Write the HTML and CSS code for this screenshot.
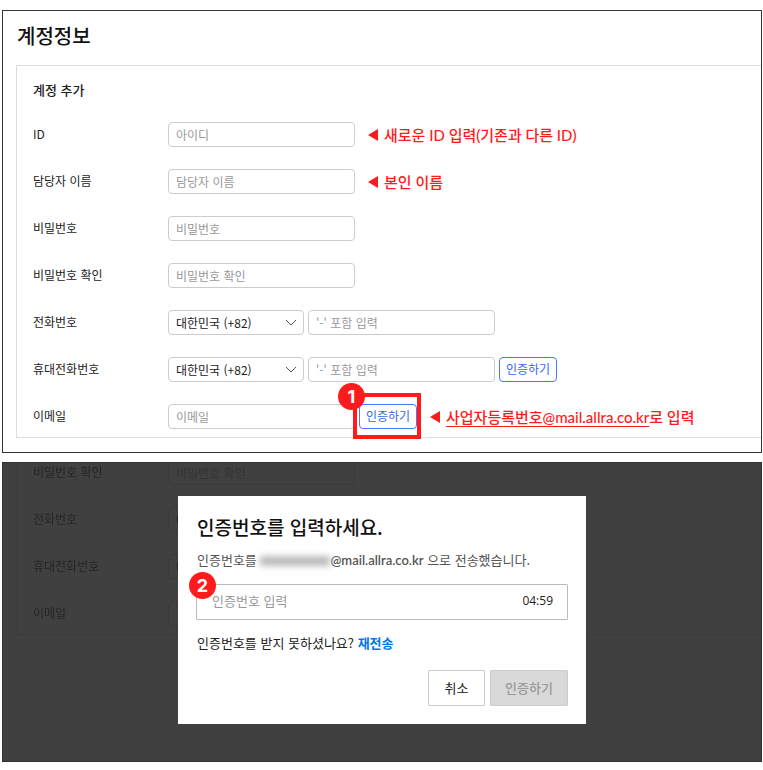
FILE: index.html
```html
<!DOCTYPE html>
<html lang="ko">
  <head>
    <meta charset="utf-8">
    <title>계정정보</title>
    <link rel="stylesheet" href="styles.css">
  </head>
  <body>
    <main class="frame account">
      <h1>계정정보</h1>
      <form class="panel">
        <h2>계정 추가</h2>
        <div class="row">
          <label for="user-id">ID</label>
          <input type="text" id="user-id" class="control" placeholder="아이디">
          <p class="note"><i class="arrow"></i>새로운 ID 입력(기존과 다른 ID)</p>
        </div>
        <div class="row">
          <label for="manager">담당자 이름</label>
          <input type="text" id="manager" class="control" placeholder="담당자 이름">
          <p class="note"><i class="arrow"></i>본인 이름</p>
        </div>
        <div class="row">
          <label for="password">비밀번호</label>
          <input type="password" id="password" class="control" placeholder="비밀번호">
        </div>
        <div class="row">
          <label for="password-check">비밀번호 확인</label>
          <input type="password" id="password-check" class="control" placeholder="비밀번호 확인">
        </div>
        <div class="row">
          <label for="phone">전화번호</label>
          <select class="control country" aria-label="전화번호 국가">
            <option>대한민국 (+82)</option>
          </select>
          <input type="tel" id="phone" class="control" placeholder="'-' 포함 입력">
        </div>
        <div class="row">
          <label for="mobile">휴대전화번호</label>
          <select class="control country" aria-label="휴대전화번호 국가">
            <option>대한민국 (+82)</option>
          </select>
          <input type="tel" id="mobile" class="control" placeholder="'-' 포함 입력">
          <button type="button" class="verify">인증하기</button>
        </div>
        <div class="row">
          <label for="email">이메일</label>
          <input type="email" id="email" class="control" placeholder="이메일">
          <div class="marked">
            <button type="button" class="verify">인증하기</button>
            <span class="outline"></span>
            <span class="badge badge-first">1</span>
          </div>
          <p class="note"><i class="arrow"></i><span><u>사업자등록번호@mail.allra.co.kr</u>로 입력</span></p>
        </div>
      </form>
    </main>

    <section class="frame dialog-frame">
      <div class="panel panel-behind" inert>
        <div class="row">
          <label for="behind-check">비밀번호 확인</label>
          <input type="password" id="behind-check" class="control" placeholder="비밀번호 확인">
        </div>
        <div class="row">
          <label for="behind-phone">전화번호</label>
          <select class="control country" aria-label="국가">
            <option>대한민국 (+82)</option>
          </select>
          <input type="tel" id="behind-phone" class="control">
        </div>
        <div class="row">
          <label for="behind-mobile">휴대전화번호</label>
          <select class="control country" aria-label="국가">
            <option>대한민국 (+82)</option>
          </select>
          <input type="tel" id="behind-mobile" class="control">
        </div>
        <div class="row">
          <label for="behind-email">이메일</label>
          <input type="email" id="behind-email" class="control">
        </div>
      </div>

      <div class="overlay">
        <form class="dialog" role="dialog" aria-labelledby="dialog-title">
          <h2 id="dialog-title">인증번호를 입력하세요.</h2>
          <p class="sent">인증번호를 <span class="masked"></span><strong>@mail.allra.co.kr</strong> 으로 전송했습니다.</p>
          <div class="code">
            <input type="text" aria-label="인증번호" placeholder="인증번호 입력">
            <time>04:59</time>
            <span class="badge badge-second">2</span>
          </div>
          <p class="resend">인증번호를 받지 못하셨나요? <a href="#">재전송</a></p>
          <div class="actions">
            <button type="button" class="cancel">취소</button>
            <button type="submit" class="submit" disabled>인증하기</button>
          </div>
        </form>
      </div>
    </section>
  </body>
</html>
```

FILE: styles.css
```css
* {
  box-sizing: border-box;
}

body {
  margin: 10px 1px 8px 2px;
  background: #fff;
  color: #222;
  font-family: "Noto Sans CJK KR", sans-serif;
  font-size: 12px;
}

h1,
h2,
p {
  margin: 0;
}

input,
select,
button {
  font: inherit;
}

.frame {
  border: 1px solid #333;
  overflow: hidden;
}

.account {
  padding: 11px 0 14px 13px;
}

.account h1 {
  padding-left: 1px;
  color: #111;
  font-size: 20px;
  line-height: 28px;
  font-weight: 500;
}

.panel {
  display: flex;
  flex-direction: column;
  gap: 22px;
  margin-top: 15px;
  padding: 13px 0 8px 16px;
  border: 1px solid #ddd;
  border-right: 0;
}

.panel h2 {
  font-size: 13px;
  line-height: 21px;
  font-weight: 500;
}

.row {
  display: flex;
  align-items: center;
  gap: 4px;
  height: 25px;
}

.row label {
  width: 131px;
  flex-shrink: 0;
  line-height: 18px;
  padding-bottom: 2px;
}

.control {
  width: 187px;
  height: 25px;
  padding: 0 7px;
  border: 1px solid #ccc;
  border-radius: 4px;
  background: #fff;
  color: #222;
  outline: none;
}

.control::placeholder {
  color: #999;
}

.country {
  width: 136px;
  appearance: none;
  background: #fff url("data:image/svg+xml,%3Csvg xmlns='http://www.w3.org/2000/svg' width='12' height='7' fill='none' stroke='%23555'%3E%3Cpath d='M1 1 6 6 11 1'/%3E%3C/svg%3E") no-repeat right 6px center;
}

.verify {
  width: 58px;
  height: 25px;
  padding: 0 0 2px;
  border: 1px solid #4a78ff;
  border-radius: 4px;
  background: #fff;
  color: #3567f5;
}

.note {
  display: flex;
  align-items: center;
  gap: 6px;
  margin-left: 9px;
  color: #ff1b1b;
  font-family: Lato, "Noto Sans CJK KR", sans-serif;
  font-size: 15px;
  line-height: 20px;
  font-weight: 500;
  white-space: nowrap;
}

.note u {
  text-decoration-thickness: 1px;
  text-underline-offset: 3px;
}

.arrow {
  border: 6px solid transparent;
  border-left-width: 0;
  border-right: 10px solid #ff1b1b;
}

.marked {
  position: relative;
  display: flex;
}

.outline {
  position: absolute;
  inset: -11px -4px -10px -6px;
  border: 4px solid #ff1b1b;
  pointer-events: none;
}

.badge {
  position: absolute;
  width: 27px;
  height: 27px;
  border-radius: 50%;
  background: #ff1b1b;
  color: #fff;
  font-family: Inter, sans-serif;
  font-size: 18px;
  line-height: 27px;
  font-weight: 700;
  text-align: center;
}

.badge-first {
  top: -21px;
  left: -21px;
}

.dialog-frame {
  position: relative;
  height: 300px;
  margin-top: 9px;
  padding-left: 13px;
}

/* the rest of the form, scrolled up under the dialog */
.panel-behind {
  margin-top: -3px;
  padding-top: 0;
  border-top: 0;
  opacity: 0.5;
}

.overlay {
  position: absolute;
  inset: 0;
  display: flex;
  align-items: center;
  justify-content: center;
  padding-bottom: 5px;
  background: rgba(0, 0, 0, 0.75);
}

.dialog {
  width: 408px;
  padding: 17px 18px 18px 19px;
  background: #fff;
  font-size: 13px;
}

.dialog h2 {
  color: #111;
  font-size: 19px;
  line-height: 28px;
  font-weight: 500;
}

.sent {
  margin-top: 9px;
  color: #555;
  line-height: 20px;
  white-space: nowrap;
}

.sent strong {
  font-family: Lato, sans-serif;
  font-size: 13px;
  font-weight: 600;
}

.masked {
  display: inline-block;
  width: 70px;
  height: 10px;
  background: #bbb;
  filter: blur(3px);
  vertical-align: -1px;
}

.code {
  position: relative;
  display: flex;
  align-items: center;
  height: 36px;
  margin: 14px 0 13px -1px;
  padding: 0 14px 2px 15px;
  border: 1px solid #bbb;
  border-radius: 1px;
}

.code input {
  flex: 1;
  min-width: 0;
  padding: 0;
  border: 0;
  outline: none;
}

.code input::placeholder {
  color: #999;
}

.code time {
  font-family: "Open Sans", sans-serif;
  font-size: 12px;
}

.badge-second {
  top: -13px;
  left: -8px;
}

.resend {
  line-height: 20px;
}

.resend a {
  color: #0078e8;
  font-weight: 700;
  text-decoration: none;
}

.actions {
  display: flex;
  justify-content: flex-end;
  gap: 5px;
  margin-top: 17px;
}

.actions button {
  height: 36px;
  padding: 0 0 1px;
  border: 1px solid #ccc;
  border-radius: 1px;
}

.cancel {
  width: 57px;
  background: #fff;
  color: #222;
}

.submit {
  width: 78px;
  background: #d9d9d9;
  color: #999;
  font-weight: 500;
}
```
